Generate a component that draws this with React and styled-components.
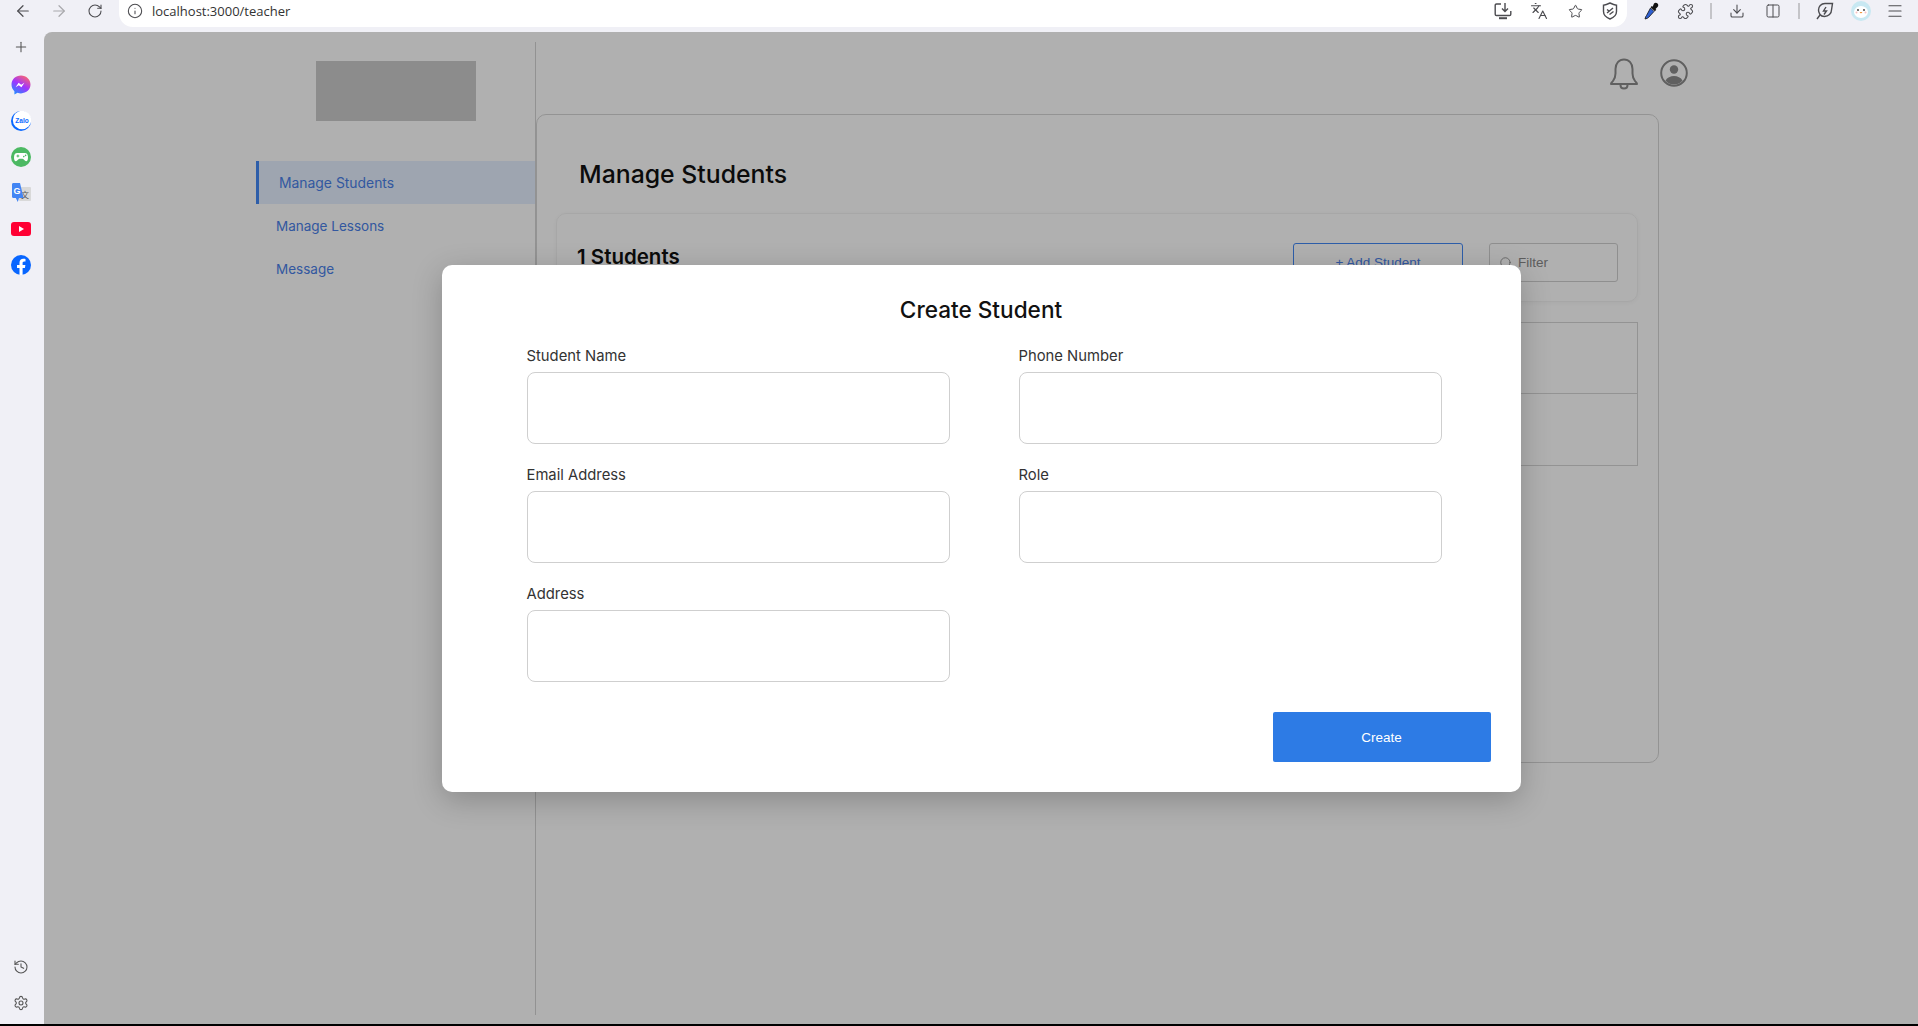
import React from 'react';
import styled, { createGlobalStyle } from 'styled-components';
import {
  ArrowLeft, ArrowRight, RotateCw, Info, Plus, Languages, Star, Puzzle,
  Download, Columns2, Menu, History, Settings, Search,
} from 'lucide-react';

const GlobalStyle = createGlobalStyle`
  html, body { margin: 0; padding: 0; background: #000; }
  * { box-sizing: border-box; }
  body { font-family: Inter, "Noto Sans", sans-serif; }
`;

const Page = styled.div`
  width: 1918px;
  height: 1024px;
  display: flex;
  flex-direction: column;
  background: #f0f0f6;
  overflow: hidden;
`;

// browser chrome
const TopBar = styled.header`
  height: 32px;
  flex: none;
  display: flex;
  align-items: flex-start;
  padding-left: 5px;
`;

const Slot = styled.span`
  width: ${(p) => p.$w || 36}px;
  height: 22px;
  flex: none;
  display: flex;
  align-items: center;
  justify-content: center;
  color: ${(p) => p.$color || '#4c4c50'};
`;

const AddressBar = styled.div`
  width: 1508px;
  height: 27px;
  margin-left: 6px;
  margin-right: 8px;
  padding: 0 0 5px 7px;
  flex: none;
  display: flex;
  align-items: center;
  background: #fff;
  border-radius: 0 0 14px 14px;
`;

const Url = styled.span`
  margin-left: 8px;
  flex: 1;
  font-family: "Open Sans", sans-serif;
  font-size: 13px;
  color: #333;
`;

const Divider = styled.i`
  width: 1.5px;
  height: 16px;
  background: #c4c4c8;
`;

const Body = styled.div`
  flex: 1;
  min-height: 0;
  display: flex;
`;

const Rail = styled.aside`
  width: 44px;
  flex: none;
  display: flex;
  flex-direction: column;
  padding-bottom: 3px;
`;

const RailSlot = styled.span`
  width: 42px;
  height: 36px;
  flex: none;
  display: flex;
  align-items: center;
  justify-content: center;
  color: #555;
`;

const NewTabSlot = styled(RailSlot)`
  height: 30px;
  margin-bottom: 5px;
`;

const RailSpacer = styled.div`
  flex: 1;
`;

const Content = styled.main`
  position: relative;
  flex: 1;
  min-width: 0;
  padding: 10px 0 9px 212px;
  display: flex;
  background: #fff;
  border-radius: 8px 0 0 0;
  overflow: hidden;
`;

// teacher page under the dialog
const SideNav = styled.nav`
  width: 280px;
  flex: none;
  padding-top: 19px;
  border-right: 1px solid #d4d4d4;
`;

const Logo = styled.div`
  width: 160px;
  height: 60px;
  margin: 0 auto 40px;
  background: #cbcbcb;
`;

const NavItem = styled.a`
  height: 43px;
  display: flex;
  align-items: center;
  padding-left: 20px;
  border-left: 3px solid ${(p) => (p.$active ? '#4388f5' : 'transparent')};
  background: ${(p) => (p.$active ? '#e5f0ff' : 'transparent')};
  font-size: ${(p) => (p.$active ? '13.9px' : '13.5px')};
  color: #4a80e8;
  margin-left: ${(p) => (p.$active ? '0' : '-3px')};
`;

const Main = styled.section`
  width: 1153px;
  flex: none;
`;

const HeaderBar = styled.div`
  height: 72px;
  display: flex;
  align-items: flex-start;
  justify-content: flex-end;
  gap: 20px;
  padding-top: 16px;
`;

const HeaderIcon = styled.span`
  display: flex;
`;

const Card = styled.div`
  width: 1123px;
  height: 649px;
  padding: 0 20px 0 19px;
  border: 1px solid #d6d6d6;
  border-radius: 10px;
`;

const PageTitle = styled.h1`
  margin: 0;
  height: 98px;
  padding: 43px 0 0 23px;
  font-size: 24.8px;
  line-height: 32px;
  font-weight: 500;
  color: #111;
`;

const Toolbar = styled.div`
  height: 89px;
  padding: 29px 19px 0 20px;
  display: flex;
  align-items: flex-start;
  border: 1px solid #f2f2f2;
  border-radius: 10px;
  box-shadow: 0 1px 4px rgba(0, 0, 0, 0.04);
`;

const Count = styled.h2`
  margin: 0;
  flex: 1;
  font-size: 20.5px;
  line-height: 28px;
  font-weight: 600;
  color: #111;
`;

const OutlineButton = styled.button`
  width: 170px;
  height: 39px;
  margin-right: 26px;
  border: 1px solid #4388f5;
  border-radius: 3px;
  background: #fff;
  font-family: "Liberation Sans", sans-serif;
  font-size: 13.5px;
  color: #4a80e8;
`;

const FilterBox = styled.label`
  width: 129px;
  height: 39px;
  padding-left: 9px;
  display: flex;
  align-items: center;
  gap: 5px;
  border: 1px solid #d0d0d0;
  border-radius: 3px;
  font-family: "Liberation Sans", sans-serif;
  font-size: 13.5px;
  color: #888;
`;

const Table = styled.div`
  margin-top: 20px;
  border: 1px solid #d6d6d6;
`;

const TableRow = styled.div`
  height: 70px;
  & + & {
    height: 72px;
    border-top: 1px solid #d6d6d6;
  }
`;

// dialog
const Overlay = styled.div`
  position: absolute;
  inset: 0;
  display: flex;
  align-items: center;
  justify-content: center;
  background: rgba(0, 0, 0, 0.31);
`;

const Dialog = styled.form`
  width: 1079px;
  height: 527px;
  margin-top: 1px;
  padding: 30px 30px 30px 85px;
  display: flex;
  flex-direction: column;
  background: #fff;
  border-radius: 10px;
  box-shadow: 0 8px 30px rgba(0, 0, 0, 0.22);
`;

const DialogTitle = styled.h3`
  margin: 0 0 20px -55px;
  font-size: 22.6px;
  line-height: 30px;
  font-weight: 500;
  text-align: center;
  color: #111;
`;

const FieldGrid = styled.div`
  display: grid;
  grid-template-columns: 423px 423px;
  column-gap: 69px;
  row-gap: 20px;
`;

const Field = styled.div`
  display: flex;
  flex-direction: column;
`;

const FieldLabel = styled.label`
  height: 27px;
  font-size: 14.8px;
  line-height: 22px;
  color: #333;
`;

const FieldInput = styled.input`
  height: 72px;
  border: 1px solid #cfcfcf;
  border-radius: 8px;
  background: #fff;
`;

const SubmitRow = styled.div`
  margin-top: auto;
  display: flex;
  justify-content: flex-end;
`;

const SubmitButton = styled.button`
  width: 218px;
  height: 50px;
  border: 0;
  border-radius: 2px;
  background: #2d7be5;
  font-family: "Liberation Sans", sans-serif;
  font-size: 13.5px;
  color: #fff;
`;

const Messenger = () => (
  <svg width="20" height="20" viewBox="0 0 20 20">
    <defs>
      <linearGradient id="msg" x1="0.2" y1="1" x2="0.8" y2="0">
        <stop offset="0" stopColor="#1f8fff" />
        <stop offset="0.5" stopColor="#a033ff" />
        <stop offset="1" stopColor="#ff6968" />
      </linearGradient>
    </defs>
    <path d="M10 .5C4.6.5.5 4.4.5 9.6c0 2.7 1.1 5 2.9 6.6v3.3l3.1-1.7c1.1.4 2.3.6 3.5.6 5.4 0 9.5-3.9 9.5-8.8S15.4.5 10 .5z" fill="url(#msg)" />
    <path d="M4.6 12.2l3-4.5 2.6 2 3.2-2-3 4.5-2.6-2z" fill="#fff" />
  </svg>
);

const Zalo = () => (
  <svg width="20" height="20" viewBox="0 0 20 20">
    <circle cx="10" cy="10" r="10" fill="#0a68ff" />
    <circle cx="11" cy="9" r="9.2" fill="#fff" />
    <text x="11" y="11.5" textAnchor="middle" fontFamily="Liberation Sans" fontWeight="700" fontSize="6.5" fill="#0a68ff">Zalo</text>
  </svg>
);

const Gamepad = () => (
  <svg width="20" height="20" viewBox="0 0 20 20">
    <circle cx="10" cy="10" r="10" fill="#4cb963" />
    <path d="M6.2 6h7.6c2 0 3.2 1.6 3.2 4.2 0 2.4-.6 4-1.9 4-1.6 0-2-2.4-3.6-2.4H8.500c-1.600 0-2 2.400-3.600 2.400C3.600 14.200 3 12.600 3 10.200 3 7.600 4.200 6 6.200 6z" fill="#fff" />
    <path d="M5.500 9h2.800M6.900 7.600v2.800" stroke="#4cb963" strokeWidth="1" />
    <circle cx="12.800" cy="9.600" r=".8" fill="#4cb963" />
    <circle cx="14.600" cy="8.400" r=".8" fill="#4cb963" />
  </svg>
);

const Translate = () => (
  <svg width="20" height="20" viewBox="0 0 20 20">
    <rect x="8" y="4" width="12" height="14" rx="1" fill="#d9d9d9" />
    <text x="14" y="15" textAnchor="middle" fontFamily="Noto Sans CJK SC" fontSize="8" fill="#555">文</text>
    <path d="M1 1.500C1 .7 1.600 0 2.400 0H9l3.600 15H8l-1.200 4-2-4H2.400C1.600 15 1 14.300 1 13.500z" fill="#4285f4" />
    <text x="6" y="10.500" textAnchor="middle" fontFamily="Liberation Sans" fontWeight="700" fontSize="9" fill="#fff">G</text>
  </svg>
);

const Youtube = () => (
  <svg width="20" height="20" viewBox="0 0 20 20">
    <rect y="3" width="20" height="14" rx="3" fill="#ff0033" />
    <path d="M8 7l5 3-5 3z" fill="#fff" />
  </svg>
);

const Facebook = () => (
  <svg width="20" height="20" viewBox="0 0 20 20">
    <circle cx="10" cy="10" r="10" fill="#0866ff" />
    <path d="M13.900 12.900l.5-2.900h-2.800V8.100c0-.8.400-1.600 1.600-1.600h1.300V4c0 0-1.100-.2-2.200-.2-2.300 0-3.800 1.400-3.800 3.900V10H6v2.900h2.500V20h3.100v-7.100z" fill="#fff" />
  </svg>
);

const InstallApp = () => (
  <svg width="18" height="18" viewBox="0 0 18 18" fill="none" stroke="#4c4c50" strokeWidth="1.400">
    <path d="M7 2H2.500C1.700 2 1.200 2.500 1.200 3.300v8.900c0 .8.500 1.300 1.300 1.300h13c.8 0 1.300-.5 1.300-1.300V9" />
    <path d="M11 1v8M8 6.500L11 9.500l3-3" />
    <path d="M5 16.200h8" strokeWidth="2" />
  </svg>
);

const Shield = () => (
  <svg width="16" height="18" viewBox="0 0 16 18" fill="none" stroke="#4c4c50" strokeWidth="1.400">
    <path d="M1.500 3.200C4 3 6 2 8 1c2 1 4 2 6.500 2.200v6.300C14.500 13 11.500 15.600 8 17 4.500 15.600 1.500 13 1.500 9.500z" />
    <path d="M5 11l6-5M5 7.500l2 1.500M7.500 12.500l4-3" />
  </svg>
);

const Dropper = () => (
  <svg width="16" height="18" viewBox="0 0 16 18">
    <path d="M10 1.500c1-1 2.500-1 3.500 0s1 2.500 0 3.500l-2 2 .8.800-1.400 1.400L6.500 5.300l1.400-1.400.8.800z" fill="#111" />
    <path d="M6.500 6L10 9.500 4.500 15.500c-.6.700-1.700 1-2.500 1.200l-1 .3.300-1c.2-.8.500-1.900 1.200-2.500z" fill="#2f5fd0" stroke="#111" strokeWidth=".8" />
  </svg>
);

const Leaf = () => (
  <svg width="18" height="18" viewBox="0 0 18 18" fill="none" stroke="#4c4c50" strokeWidth="1.400">
    <path d="M16.500 1.500H9C5 1.500 2.500 4.500 2.500 8c0 1.500.5 3 1.500 4.500.9 1.300 3 2 4.500 2 4 0 7-3 7-6.500z" />
    <path d="M1 17l3-4M10 5L7.500 9h3L8 12.500" />
  </svg>
);

const Avatar = () => (
  <svg width="20" height="20" viewBox="0 0 20 20">
    <circle cx="10" cy="10" r="10" fill="#c8e8f2" />
    <ellipse cx="10" cy="11" rx="7" ry="6" fill="#fff" />
    <circle cx="7" cy="9" r=".9" fill="#333" />
    <circle cx="13" cy="9" r=".9" fill="#333" />
    <path d="M8.500 11h3L10 12.500z" fill="#f28c28" />
    <circle cx="5.500" cy="11.500" r="1" fill="#f7c0c0" />
    <circle cx="14.500" cy="11.500" r="1" fill="#f7c0c0" />
  </svg>
);

const BellIcon = () => (
  <svg width="30" height="32" viewBox="0 0 30 32" fill="none" stroke="#8c8c8c" strokeWidth="2" strokeLinejoin="round">
    <path d="M2 26c0-1 1-1.600 2-3 1.500-2 2.500-3.500 2.500-7.500V11C6.500 5.500 10 1.500 15 1.500S23.500 5.500 23.500 11v4.500c0 4 1 5.500 2.500 7.500 1 1.400 2 2 2 3z" />
    <path d="M11.500 27c0 2 1.500 3.500 3.500 3.500s3.500-1.500 3.500-3.500" />
  </svg>
);

const UserCircle = () => (
  <svg width="30" height="30" viewBox="0 0 30 30">
    <circle cx="15" cy="15" r="12.800" fill="none" stroke="#8c8c8c" strokeWidth="2" />
    <circle cx="15" cy="11.500" r="4.200" fill="#8c8c8c" />
    <path d="M6.500 22.500c1.500-3 5-4.500 8.500-4.500s7 1.500 8.500 4.500c-2 2.500-5 4-8.500 4s-6.500-1.500-8.500-4z" fill="#8c8c8c" />
  </svg>
);

const railLinks = [<Messenger />, <Zalo />, <Gamepad />, <Translate />, <Youtube />, <Facebook />];
const navItems = ['Manage Students', 'Manage Lessons', 'Message'];
const fields = ['Student Name', 'Phone Number', 'Email Address', 'Role', 'Address'];

export default function App() {
  return (
    <Page>
      <GlobalStyle />
      <TopBar>
        <Slot><ArrowLeft size={18} strokeWidth={1.6} /></Slot>
        <Slot $color="#a8a8ac"><ArrowRight size={18} strokeWidth={1.6} /></Slot>
        <Slot><RotateCw size={16} strokeWidth={1.6} /></Slot>
        <AddressBar>
          <Slot $w={18}><Info size={16} strokeWidth={1.6} /></Slot>
          <Url>localhost:3000/teacher</Url>
          <Slot><InstallApp /></Slot>
          <Slot><Languages size={18} strokeWidth={1.5} /></Slot>
          <Slot><Star size={15} strokeWidth={1.6} /></Slot>
          <Slot $w={34}><Shield /></Slot>
        </AddressBar>
        <Slot $w={34}><Dropper /></Slot>
        <Slot $w={32}><Puzzle size={17} strokeWidth={1.5} /></Slot>
        <Slot $w={20}><Divider /></Slot>
        <Slot $w={32}><Download size={16} strokeWidth={1.6} /></Slot>
        <Slot $w={40}><Columns2 size={16} strokeWidth={1.5} /></Slot>
        <Slot $w={12}><Divider /></Slot>
        <Slot $w={40}><Leaf /></Slot>
        <Slot $w={32}><Avatar /></Slot>
        <Slot><Menu size={18} strokeWidth={1.6} /></Slot>
      </TopBar>
      <Body>
        <Rail>
          <NewTabSlot><Plus size={16} strokeWidth={1.6} /></NewTabSlot>
          {railLinks.map((icon, i) => <RailSlot key={i}>{icon}</RailSlot>)}
          <RailSpacer />
          <RailSlot><History size={16} strokeWidth={1.6} /></RailSlot>
          <RailSlot><Settings size={16} strokeWidth={1.6} /></RailSlot>
        </Rail>
        <Content>
          <SideNav>
            <Logo />
            {navItems.map((item, i) => <NavItem key={item} $active={i === 0}>{item}</NavItem>)}
          </SideNav>
          <Main>
            <HeaderBar>
              <HeaderIcon><BellIcon /></HeaderIcon>
              <HeaderIcon><UserCircle /></HeaderIcon>
            </HeaderBar>
            <Card>
              <PageTitle>Manage Students</PageTitle>
              <Toolbar>
                <Count>1 Students</Count>
                <OutlineButton type="button">+ Add Student</OutlineButton>
                <FilterBox><Search size={14} strokeWidth={1.4} />Filter</FilterBox>
              </Toolbar>
              <Table>
                <TableRow />
                <TableRow />
              </Table>
            </Card>
          </Main>
          <Overlay>
            <Dialog>
              <DialogTitle>Create Student</DialogTitle>
              <FieldGrid>
                {fields.map((name) => (
                  <Field key={name}>
                    <FieldLabel>{name}</FieldLabel>
                    <FieldInput />
                  </Field>
                ))}
              </FieldGrid>
              <SubmitRow>
                <SubmitButton type="button">Create</SubmitButton>
              </SubmitRow>
            </Dialog>
          </Overlay>
        </Content>
      </Body>
    </Page>
  );
}
